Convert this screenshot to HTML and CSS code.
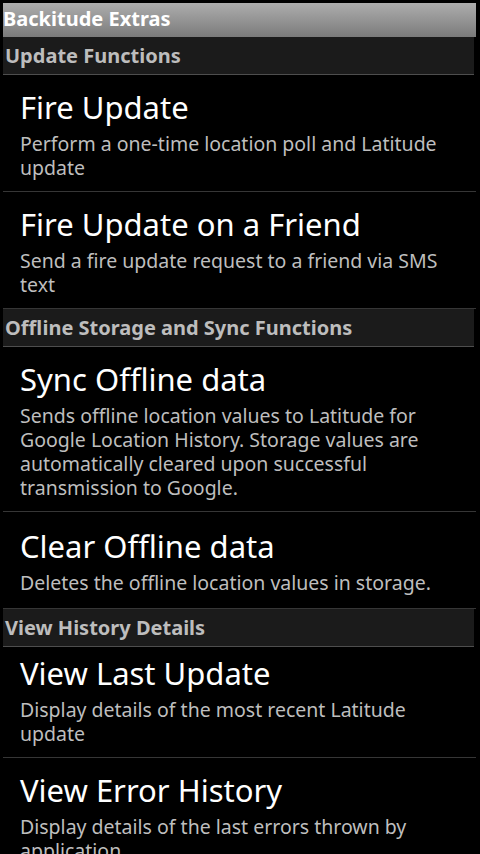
FILE: index.html
```
<!DOCTYPE html>
<html lang="en">
<head>
<meta charset="utf-8">
<title>Backitude Extras</title>
<link rel="stylesheet" href="styles.css">
</head>
<body>
<div class="screen">
  <header class="titlebar">Backitude Extras</header>

  <section class="group">
    <h2 class="group-head">Update Functions</h2>
    <div class="pref">
      <div class="pref-title">Fire Update</div>
      <div class="pref-summary">Perform a one-time location poll and Latitude update</div>
    </div>
    <div class="pref">
      <div class="pref-title">Fire Update on a Friend</div>
      <div class="pref-summary">Send a fire update request to a friend via SMS text</div>
    </div>
  </section>

  <section class="group">
    <h2 class="group-head">Offline Storage and Sync Functions</h2>
    <div class="pref">
      <div class="pref-title">Sync Offline data</div>
      <div class="pref-summary">Sends offline location values to Latitude for Google Location History. Storage values are automatically cleared upon successful transmission to Google.</div>
    </div>
    <div class="pref pref-short">
      <div class="pref-title">Clear Offline data</div>
      <div class="pref-summary">Deletes the offline location values in storage.</div>
    </div>
  </section>

  <section class="group">
    <h2 class="group-head">View History Details</h2>
    <div class="pref pref-first-tight">
      <div class="pref-title">View Last Update</div>
      <div class="pref-summary">Display details of the most recent Latitude update</div>
    </div>
    <div class="pref">
      <div class="pref-title">View Error History</div>
      <div class="pref-summary">Display details of the last errors thrown by application</div>
    </div>
  </section>
</div>
</body>
</html>
```

FILE: styles.css
```
html, body {
  margin: 0;
  padding: 0;
  background: #000;
}

body {
  width: 480px;
  height: 854px;
  overflow: hidden;
  font-family: "Noto Sans", "Open Sans", "DejaVu Sans", sans-serif;
}

.screen {
  padding: 3px 4px 0 3px;
}

.titlebar {
  height: 34px;
  box-sizing: border-box;
  padding: 0 0 4px 0;
  line-height: 31px;
  font-size: 20px;
  font-weight: bold;
  color: #fff;
  background: linear-gradient(#adadad, #7b7b7b);
  white-space: nowrap;
}

.group {
  display: flex;
  flex-direction: column;
}

.group-head {
  margin: 0 2px 0 0;
  height: 38px;
  padding: 1px 0 0 2px;
  box-sizing: border-box;
  line-height: 35px;
  font-size: 20px;
  font-weight: bold;
  color: #bdbdbd;
  background: #1b1b1b;
  border-bottom: 1px solid #4e4e4e;
}

.pref {
  display: flex;
  flex-direction: column;
  justify-content: center;
  padding: 12px 16px 11px 17px;
  border-bottom: 1px solid #363636;
}

.pref-short {
  min-height: 97px;
  box-sizing: border-box;
}

.pref-first-tight {
  padding-top: 6px;
}

.pref-title {
  font-size: 31px;
  line-height: 40px;
  color: #fff;
  white-space: nowrap;
}

.pref-summary {
  margin-top: 5px;
  font-size: 19.5px;
  line-height: 24px;
  color: #bebebe;
}
```
